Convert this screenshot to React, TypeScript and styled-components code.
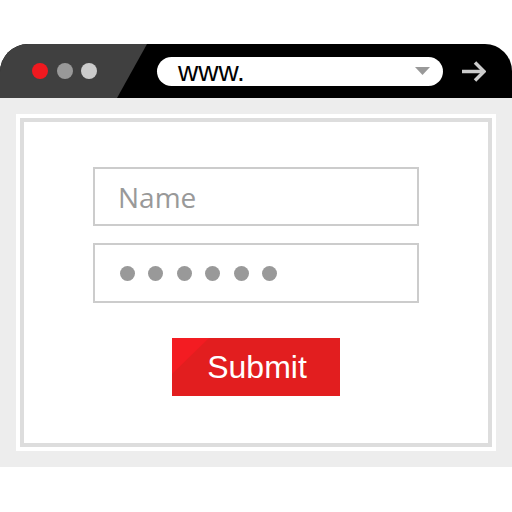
import React from "react";
import styled, { createGlobalStyle } from "styled-components";

const GlobalStyle = createGlobalStyle`
  html, body { margin: 0; padding: 0; background: #ffffff; }
  body { font-family: "Liberation Sans", Arial, sans-serif; }
  * { box-sizing: border-box; }
`;

const Page = styled.div`
  width: 512px;
  height: 512px;
  padding-top: 44px;
  background: #ffffff;
`;

const Window = styled.div`
  width: 512px;
  display: flex;
  flex-direction: column;
`;

const TitleBar = styled.div`
  position: relative;
  height: 54px;
  background: #000000;
  border-radius: 28px 27px 0 0;
  overflow: hidden;
  display: flex;
  align-items: center;
`;

const Controls = styled.div`
  width: 147px;
  height: 100%;
  flex: none;
  background: #404040;
  clip-path: polygon(0 0, 100% 0, calc(100% - 30px) 100%, 0 100%);
  display: flex;
  align-items: center;
  gap: 8.5px;
  padding-left: 32px;
`;

const Dot = styled.span<{ $color: string }>`
  width: 16px;
  height: 16px;
  border-radius: 50%;
  background: ${(p) => p.$color};
  flex: none;
`;

const UrlBar = styled.div`
  margin-left: 10px;
  width: 286px;
  height: 29px;
  border-radius: 15px;
  background: #ffffff;
  display: flex;
  align-items: center;
  justify-content: space-between;
  padding: 0 13px 0 21px;
`;

const UrlText = styled.span`
  font-family: "Liberation Sans", Arial, sans-serif;
  font-size: 28px;
  line-height: 1;
  color: #000000;
  margin-top: 1px;
`;

const GoButton = styled.div`
  margin-left: 18px;
  width: 25px;
  height: 21px;
  display: flex;
`;

const Viewport = styled.div`
  height: 369px;
  background: #ededed;
  padding: 16px;
`;

const Sheet = styled.div`
  height: 337px;
  background: #ffffff;
  padding: 4px;
`;

const Frame = styled.div`
  height: 100%;
  border: 4px solid #dddddd;
  display: flex;
  flex-direction: column;
  align-items: center;
  padding-top: 45px;
`;

const Field = styled.div<{ $height: number }>`
  width: 326px;
  height: ${(p) => p.$height}px;
  border: 2px solid #cccccc;
  display: flex;
  align-items: center;
  padding-left: 23px;
  & + & {
    margin-top: 17px;
  }
`;

const Placeholder = styled.span`
  font-family: "Open Sans", sans-serif;
  font-size: 28px;
  color: #999999;
  line-height: 1;
`;

const Bullets = styled.div`
  display: flex;
  gap: 13.4px;
  padding-left: 2px;
`;

const Bullet = styled.span`
  width: 15px;
  height: 15px;
  border-radius: 50%;
  background: #999999;
`;

const SubmitButton = styled.div`
  position: relative;
  margin-top: 35px;
  width: 168px;
  height: 58px;
  background: #e21e1f;
  display: flex;
  align-items: center;
  justify-content: center;
  overflow: hidden;
  &::before {
    content: "";
    position: absolute;
    left: 0;
    top: 0;
    width: 37px;
    height: 36px;
    background: #f31c22;
    clip-path: polygon(0 0, 100% 0, 0 100%);
  }
`;

const SubmitLabel = styled.span`
  position: relative;
  font-family: "Liberation Sans", Arial, sans-serif;
  font-size: 32px;
  color: #ffffff;
  line-height: 1;
  margin-left: 2px;
`;

export default function App() {
  return (
    <>
      <GlobalStyle />
      <Page>
        <Window>
          <TitleBar>
            <Controls>
              <Dot $color="#f0191f" />
              <Dot $color="#999999" />
              <Dot $color="#cccccc" />
            </Controls>
            <UrlBar>
              <UrlText>www.</UrlText>
              <svg width="15" height="8" viewBox="0 0 15 8">
                <polygon points="0,0 15,0 7.5,8" fill="#999999" />
              </svg>
            </UrlBar>
            <GoButton>
              <svg width="25" height="21" viewBox="0 0 25 21">
                <line x1="1" y1="10.5" x2="23" y2="10.5" stroke="#cccccc" strokeWidth="3.5" />
                <polyline
                  points="14,1.5 23,10.5 14,19.5"
                  fill="none"
                  stroke="#cccccc"
                  strokeWidth="3.5"
                />
              </svg>
            </GoButton>
          </TitleBar>
          <Viewport>
            <Sheet>
              <Frame>
                <Field $height={59}>
                  <Placeholder>Name</Placeholder>
                </Field>
                <Field $height={60}>
                  <Bullets>
                    {Array.from({ length: 6 }).map((_, i) => (
                      <Bullet key={i} />
                    ))}
                  </Bullets>
                </Field>
                <SubmitButton>
                  <SubmitLabel>Submit</SubmitLabel>
                </SubmitButton>
              </Frame>
            </Sheet>
          </Viewport>
        </Window>
      </Page>
    </>
  );
}
